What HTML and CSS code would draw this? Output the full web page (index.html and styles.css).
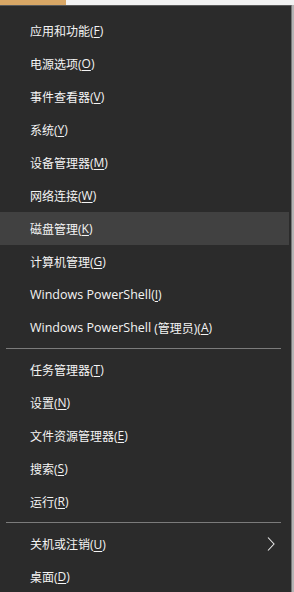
FILE: index.html
```html
<!DOCTYPE html>
<html lang="zh-CN">
<head>
    <meta charset="UTF-8">
    <title>快速链接菜单</title>
    <link rel="stylesheet" href="styles.css">
</head>
<body>
    <div class="topbar">
        <div class="top-accent"></div>
        <div class="top-light"></div>
    </div>
    <div class="screen">
        <div class="menu">
            <div class="item">应用和功能(<u>F</u>)</div>
            <div class="item">电源选项(<u>O</u>)</div>
            <div class="item">事件查看器(<u>V</u>)</div>
            <div class="item">系统(<u>Y</u>)</div>
            <div class="item">设备管理器(<u>M</u>)</div>
            <div class="item">网络连接(<u>W</u>)</div>
            <div class="item active">磁盘管理(<u>K</u>)</div>
            <div class="item">计算机管理(<u>G</u>)</div>
            <div class="item"><span class="en">Windows PowerShell</span>(<u>I</u>)</div>
            <div class="item"><span class="en">Windows PowerShell</span>&nbsp;(管理员)(<u>A</u>)</div>
            <div class="sep"></div>
            <div class="item">任务管理器(<u>T</u>)</div>
            <div class="item">设置(<u>N</u>)</div>
            <div class="item">文件资源管理器(<u>E</u>)</div>
            <div class="item">搜索(<u>S</u>)</div>
            <div class="item">运行(<u>R</u>)</div>
            <div class="sep"></div>
            <div class="item has-sub">
                <span>关机或注销(<u>U</u>)</span>
                <svg class="chevron" width="8" height="14" viewBox="0 0 8 14">
                    <path d="M1 0.5 L7 7 L1 13.5" fill="none" stroke="#e8e8e8" stroke-width="1.1"/>
                </svg>
            </div>
            <div class="item">桌面(<u>D</u>)</div>
        </div>
        <div class="edge"></div>
    </div>
</body>
</html>
```

FILE: styles.css
```css
* {
    box-sizing: border-box;
    margin: 0;
    padding: 0;
}

body {
    background: #2b2b2b;
    font-family: 'Open Sans', 'Noto Sans CJK SC', sans-serif;
    font-size: 12px;
    color: #f4f4f4;
    height: 592px;
    overflow: hidden;
}

.topbar {
    display: flex;
    height: 5px;
}

.top-accent {
    width: 66px;
    background: #d8a766;
}

.top-light {
    flex: 1;
    background: #f2f2f2;
}

.screen {
    display: flex;
}

.menu {
    width: 291px;
    padding-top: 8px;
    background: #2b2b2b;
    border-top: 1px solid #5a5a5a;
}

.item {
    height: 33px;
    padding-left: 30px;
    padding-right: 14px;
    display: flex;
    align-items: center;
    width: 289px;
    white-space: nowrap;
}

.item u {
    text-underline-offset: 2px;
}

.item .en {
    font-size: 12.5px;
}

.item.active {
    background: #414141;
}

.has-sub {
    justify-content: space-between;
}

.chevron {
    display: block;
}

.sep {
    height: 1px;
    margin: 4px 10px 4px 6px;
    background: #7b7b7b;
}

.edge {
    flex: 1;
    height: 600px;
    background: linear-gradient(to right, #777 0, #777 1px, #b4b4b4 1px);
}
```
